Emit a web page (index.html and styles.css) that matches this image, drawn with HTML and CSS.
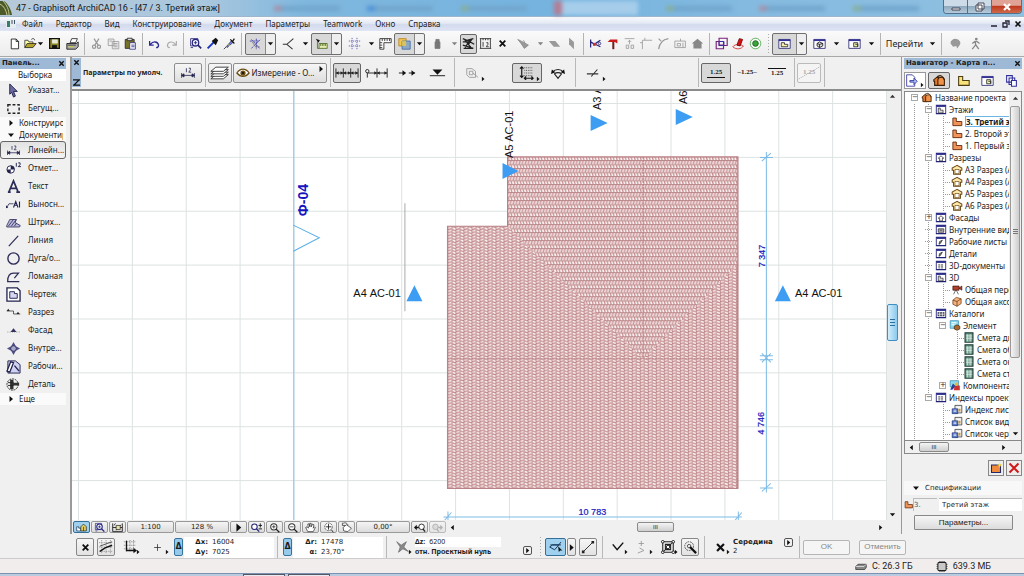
FILE: index.html
```html
<!DOCTYPE html>
<html lang="ru">
<head>
<meta charset="utf-8">
<title>47 - Graphisoft ArchiCAD 16</title>
<link rel="stylesheet" href="styles.css">
</head>
<body>
<svg class="defs" aria-hidden="true">
  <symbol id="arr" viewBox="0 0 8 8"><path d="M1 2.500h6L4 6z" fill="#111"/></symbol>
  <symbol id="rt" viewBox="0 0 8 8"><path d="M2.500 1v6L6 4z" fill="#111"/></symbol>
  <symbol id="lt" viewBox="0 0 8 8"><path d="M5.500 1v6L2 4z" fill="#111"/></symbol>
  <symbol id="up" viewBox="0 0 8 8"><path d="M1 5.500h6L4 2z" fill="#333"/></symbol>
  <symbol id="x" viewBox="0 0 8 8"><path d="M1.500 1.500l5 5M6.500 1.500l-5 5" stroke="#111" stroke-width="1.600"/></symbol>
  <symbol id="new" viewBox="0 0 16 16"><path d="M4 2.500h6l3 3v9H4z" fill="#fff" stroke="#111"/><path d="M10 2.500v3h3" fill="none" stroke="#111"/></symbol>
  <symbol id="open" viewBox="0 0 16 16"><path d="M1 13V4h4l1 2h5v3" fill="#ffffa0" stroke="#333"/><path d="M1 13l3-5h11l-4 5z" fill="#b5a42c" stroke="#222"/><path d="M9 3c2-2 4-1 4 1" fill="none" stroke="#222"/></symbol>
  <symbol id="save" viewBox="0 0 16 16"><path d="M2 2h12v12H2z" fill="#8a8423" stroke="#111" stroke-width="1.500"/><path d="M5 3h7v5H5z" fill="#e8e8d8"/><path d="M5 10h6v4H5z" fill="#111"/></symbol>
  <symbol id="print" viewBox="0 0 16 16"><path d="M5 7l2-5h7l-2 5z" fill="#fff" stroke="#222"/><path d="M1 8h12l2-2v6l-3 3H1z" fill="#aaa" stroke="#111"/><path d="M3 12h7" stroke="#dd2"/><path d="M2 10h10" stroke="#333"/></symbol>
  <symbol id="cut" viewBox="0 0 16 16"><path d="M5 2l5 8M11 2L6 10" stroke="#999" stroke-width="1.500"/><g fill="none" stroke="#999" stroke-width="1.500"><circle cx="5" cy="12" r="2"/><circle cx="11" cy="12" r="2"/></g></symbol>
  <symbol id="copy" viewBox="0 0 16 16"><g fill="#eee" stroke="#999"><path d="M1.500 2.500h7v8h-7zM6.500 5.500h8v9h-8z"/><path d="M8 8h5M8 10h5M8 12h5M3 5h3"/></g></symbol>
  <symbol id="paste" viewBox="0 0 16 16"><path d="M1.500 3h11v11h-11z" fill="#77722a" stroke="#222"/><path d="M4 1.500h6v3H4z" fill="#ddd" stroke="#222"/><path d="M7 7h7v8H7z" fill="#fff" stroke="#2b2b80"/><path d="M9 10h4M9 12h4" stroke="#2b2b80"/></symbol>
  <symbol id="undo" viewBox="0 0 16 16"><path d="M2 5v5h5M3 9c3-4 9-4 10 1 0 2-1 3-3 3" fill="none" stroke="#2a2a96" stroke-width="1.600"/></symbol>
  <symbol id="redo" viewBox="0 0 16 16"><path d="M14 5v5H9M13 9C10 5 4 5 3 10c0 2 1 3 3 3" fill="none" stroke="#aaa" stroke-width="1.400"/></symbol>
  <symbol id="find" viewBox="0 0 16 16"><path d="M2 2v9h8M2 2h9v7M5 13l-3 0" fill="none" stroke="#23237a"/><circle cx="8" cy="7" r="4" fill="#eef" stroke="#23237a" stroke-width="1.500"/><path d="M11 10l4 4" stroke="#23237a" stroke-width="2"/><path d="M6 7h4M8 5v4" stroke="#23237a"/></symbol>
  <symbol id="drop1" viewBox="0 0 16 16"><path d="M2 14l8-8" stroke="#1c35c8" stroke-width="2.500"/><path d="M7 5l5 5 3-6-3-3z" fill="#111"/></symbol>
  <symbol id="drop2" viewBox="0 0 16 16"><path d="M1 15l3-3" stroke="#223"/><path d="M4 12l6-7 2 2-7 6z" fill="#6f7ff0" stroke="#223" stroke-width=".8"/><path d="M9 3l5 5M12 5l2-3" stroke="#111" stroke-width="1.500"/><path d="M6 9l3 2" stroke="#cc3"/></symbol>
  <symbol id="snap" viewBox="0 0 16 16"><path d="M1 5h12M3 14L14 3M3 3l10 11M9 2v13" stroke="#3838a8" fill="none" stroke-dasharray="3 1"/><path d="M4 6l4 6h5" stroke="#777" fill="none"/></symbol>
  <symbol id="branch" viewBox="0 0 16 16"><path d="M1 9h5l8-7M6 9l7 6" stroke="#333" fill="none" stroke-width="1.300"/></symbol>
  <symbol id="measure" viewBox="0 0 16 16"><path d="M1 2l5 2-2 3z" fill="#111"/><path d="M5 8h10v6H5z" fill="#e6edae" stroke="#4a6a22"/><path d="M7 8v3M9 8v3M11 8v3M13 8v3M3 5v9h2" stroke="#4a6a22" fill="none"/></symbol>
  <symbol id="grid" viewBox="0 0 16 16"><path d="M5 1v14M11 1v14M1 5h14M1 11h14" stroke="#5050b8" stroke-dasharray="1.500 1"/></symbol>
  <symbol id="ruler" viewBox="0 0 16 16"><path d="M1 2h14v5H6v8H1z" fill="#fff" stroke="#222"/><path d="M4 2v3M7 2v3M10 2v3M13 2v3M1 7h3M1 10h3M1 13h3" stroke="#222"/></symbol>
  <symbol id="trace" viewBox="0 0 16 16"><path d="M1 2h9v9H1z" fill="#f4c64e" stroke="#b88420"/><path d="M5 5h10v10H5z" fill="#8ba9c4" stroke="#4067a8"/><path d="M5 5h5v6H5z" fill="#d8c45c"/></symbol>
  <symbol id="lock" viewBox="0 0 16 16"><path d="M5 6h6v8H5zM6 6V3h4v3" fill="#777" stroke="#777"/></symbol>
  <symbol id="hatchic" viewBox="0 0 16 16"><path d="M1 2l5 2 8-2M1 6h9l5 3M3 3l8 10M10 3L4 13M1 10l13 4M2 14h11M12 3l-4 6" fill="none" stroke="#222" stroke-width="1.500"/></symbol>
  <symbol id="dim12" viewBox="0 0 16 16"><path d="M1 2h14M1 14h14M2 2v12M14 2v12M5 2v2M8 2v2M11 2v2" stroke="#222" fill="none"/><path d="M5 6v6M9 7h2v2l-2 3h3" stroke="#222" fill="none"/></symbol>
  <symbol id="plane" viewBox="0 0 16 16"><path d="M1 3l6 3 7 4-5 4-4-6z" fill="#999" stroke="#888"/><path d="M10 8l-2-4" stroke="#888"/></symbol>
  <symbol id="skew1" viewBox="0 0 16 16"><path d="M1 5h8l6 7H7z" fill="#999"/></symbol>
  <symbol id="skew2" viewBox="0 0 16 16"><path d="M5 1l6 5v9L5 9z" fill="#999"/></symbol>
  <symbol id="trim1" viewBox="0 0 16 16"><path d="M2 3v10M2 6l5 3M14 4L5 10M14 12L6 8" stroke="#23237a" stroke-width="1.500"/><circle cx="7" cy="9" r="2" fill="#c33"/><circle cx="13" cy="8" r="1.500" fill="none" stroke="#23237a"/></symbol>
  <symbol id="hammer" viewBox="0 0 16 16"><path d="M2 6l3-3h9v5l-3-2z" fill="#cc1b1b"/><path d="M9 6v9" stroke="#702020" stroke-width="2.500"/></symbol>
  <symbol id="adj" viewBox="0 0 16 16"><path d="M2 2h12M8 4v5M6 6l2-2 2 2M4 10h3v4H4zM10 10h3v4h-3z" stroke="#999" fill="none"/></symbol>
  <symbol id="corner" viewBox="0 0 16 16"><path d="M3 15V4h12M6 4V1M3 7H0" stroke="#999" fill="none"/></symbol>
  <symbol id="fillet" viewBox="0 0 16 16"><path d="M2 15C3 8 7 3 14 2M5 5L2 2" stroke="#999" fill="none" stroke-width="1.500"/></symbol>
  <symbol id="boxa" viewBox="0 0 16 16"><path d="M1 5h13v8H1zM4 8h4v3H4zM8 2v3M11 7v6" stroke="#999" fill="none"/></symbol>
  <symbol id="house" viewBox="0 0 16 16"><path d="M8 2L1 8h2v6h10V8h2z" fill="#888"/></symbol>
  <symbol id="sq2" viewBox="0 0 16 16"><path d="M5 1.500h10v9H5zM1.500 5.500h9v9h-9zM5 5v5h5" stroke="#782078" fill="none" stroke-width="1.400"/><path d="M5 5.500h6v5H5z" fill="none" stroke="#3030b0"/></symbol>
  <symbol id="lipst" viewBox="0 0 16 16"><path d="M1 12c3-4 10-3 13-1-2 4-9 5-13 1z" fill="none" stroke="#c22"/><path d="M6 10l3-8 4 1-3 8z" fill="#d11" stroke="#600"/></symbol>
  <symbol id="target" viewBox="0 0 16 16"><circle cx="8" cy="8" r="6.500" fill="#fff" stroke="#3da53d"/><circle cx="8" cy="8" r="3.500" fill="#3da53d" stroke="#145a14"/></symbol>
  <symbol id="win" viewBox="0 0 16 16"><path d="M1 3h14v11H1z" fill="#fff" stroke="#23236e"/><path d="M1 3h14v2H1z" fill="#33339a"/></symbol>
  <symbol id="wplan" viewBox="0 0 16 16"><use href="#win"/><path d="M4 7h4v2h4v3H4z" fill="#f6efb0" stroke="#222"/></symbol>
  <symbol id="w3d" viewBox="0 0 16 16"><use href="#win"/><path d="M5 8l3-2 4 2v3l-4 2-3-2zM8 9v4M5 8l3 1 4-1" fill="#ddd" stroke="#111"/></symbol>
  <symbol id="wlay" viewBox="0 0 16 16"><use href="#win"/><path d="M7 7h5v5H7zM9 9h3v3" fill="#eef3b0" stroke="#222"/></symbol>
  <symbol id="orbit" viewBox="0 0 16 16"><path d="M2 8a6 5 0 1 1 11 2l-3 4-1-3-4 1z" fill="#999"/></symbol>
  <symbol id="walk" viewBox="0 0 16 16"><circle cx="9" cy="2.500" r="1.700" fill="#888"/><path d="M8 5v5l-4 5M8 9l4 6M8 5L4 8M9 5l4 3" stroke="#888" stroke-width="1.600" fill="none"/></symbol>
  <symbol id="lin" viewBox="0 0 20 16"><path d="M2 8v6M18 8v6M2 11h16M2 11l3-2v4zM18 11l-3-2v4z" stroke="#23234e" fill="#23234e"/><path d="M8 2v5M11 2h2v2l-2 3h3" stroke="#23234e" fill="none"/></symbol>
  <symbol id="layers" viewBox="0 0 24 16"><g fill="#fff" stroke="#222"><path d="M1 15l6-5h15l-6 5z"/><path d="M1 12l6-5h15l-6 5z"/><path d="M1 9l6-5h15l-6 5z"/><path d="M1 6l6-5h15l-6 5z"/></g></symbol>
  <symbol id="eye" viewBox="0 0 16 12"><path d="M1 6c4-6 10-6 14 0-4 5-10 5-14 0z" fill="#fff" stroke="#6a4c10" stroke-width="1.400"/><circle cx="8" cy="6" r="3" fill="#6a4c10"/><circle cx="8" cy="6" r="1.200" fill="#111"/></symbol>
  <symbol id="ch1" viewBox="0 0 26 12"><path d="M1 1v10M9 1v10M17 1v10M25 1v10M1 6h24" stroke="#222"/><path d="M1 6l3-2v4zM9 6L6 4v4zM9 6l3-2v4zM17 6l-3-2v4zM17 6l3-2v4zM25 6l-3-2v4z" fill="#222"/></symbol>
  <symbol id="ch2" viewBox="0 0 26 12"><circle cx="2.500" cy="4" r="1.800" fill="none" stroke="#222"/><path d="M2.500 6v5M13 1v10M24 1v10M3 6h21" stroke="#222"/><path d="M13 6l-3-2v4zM24 6l-3-2v4zM13 6l3-2v4z" fill="#222"/></symbol>
  <symbol id="ch3" viewBox="0 0 20 12"><path d="M1 6h7M12 6h7" stroke="#111"/><path d="M9 6L5 3v6zM19 6l-4-3v6z" fill="#111"/></symbol>
  <symbol id="ch4" viewBox="0 0 20 12"><path d="M2 9h17" stroke="#111"/><path d="M5 2h11l-5.500 6z" fill="#111"/></symbol>
  <symbol id="geo1" viewBox="0 0 16 16"><path d="M2 3h6l4 3v7H5l-3-3zM5 6h4v4H5z" fill="none" stroke="#999"/><path d="M9 8l6 5" stroke="#999"/></symbol>
  <symbol id="geo2" viewBox="0 0 20 16"><path d="M4 1v12M2 3l2-2 2 2M2 11l2 2 2-2M7 14h10M9 12l-2 2 2 2M15 12l2 2-2 2" stroke="#111" fill="none" stroke-width="1.300"/><path d="M7 2h10M7 5h10M7 8h10M7 11h10" stroke="#444" stroke-dasharray="1 1"/></symbol>
  <symbol id="geo3" viewBox="0 0 16 16"><path d="M2 7c3-4 9-4 12 0M4 9l4 5 4-5c-2-2-6-2-8 0z" fill="none" stroke="#222" stroke-width="1.300"/><path d="M0 9l1-5 4 3zM16 9l-1-5-4 3z" fill="#111"/></symbol>
  <symbol id="wit" viewBox="0 0 16 12"><path d="M1 7h13M6 10l7-8" stroke="#333" fill="none" stroke-width="1.300"/></symbol>
  <symbol id="ptr" viewBox="0 0 16 16"><path d="M4 1l8 8H8l2 5-2 1-2-5-2 2z" fill="#6a6aa0" stroke="#22224e"/></symbol>
  <symbol id="marq" viewBox="0 0 16 16"><path d="M2 4h12v9H2z" fill="none" stroke="#222" stroke-width="1.500" stroke-dasharray="3 2"/></symbol>
  <symbol id="lvl" viewBox="0 0 16 16"><circle cx="5" cy="9" r="4" fill="#fff" stroke="#22224e"/><path d="M5 5a4 4 0 0 1 4 4H1a4 4 0 0 0 4 4z" fill="#22224e"/><path d="M11 2v4M13 2h2v2l-2 2h3" stroke="#22224e" fill="none"/></symbol>
  <symbol id="ta" viewBox="0 0 16 16"><path d="M2 14h3M3 14L8 2l5 12M11 14h4M5 10h6" stroke="#2c2c58" stroke-width="1.800" fill="none"/></symbol>
  <symbol id="lead" viewBox="0 0 20 16"><path d="M1 12l3-5h6" stroke="#22224e" fill="none"/><path d="M0 13v-4l3 3z" fill="#22224e"/><path d="M10 12l3-8 3 8M11 9h4M18 4v8" stroke="#22224e" stroke-width="1.500" fill="none"/></symbol>
  <symbol id="htch" viewBox="0 0 20 16"><path d="M1 12L5 4h9l-2 4 7 4-1 2H1z" fill="#b8b8dc" stroke="#22224e"/><path d="M3 13l7-9M7 13l6-8M11 13l3-4" stroke="#22224e"/></symbol>
  <symbol id="line" viewBox="0 0 16 16"><path d="M3 14L13 3" stroke="#2c2c58" stroke-width="1.300"/></symbol>
  <symbol id="circ" viewBox="0 0 16 16"><circle cx="8" cy="8" r="6" fill="none" stroke="#2c2c58" stroke-width="1.500"/></symbol>
  <symbol id="poly" viewBox="0 0 18 16"><path d="M16 14H2c0-6 2-10 7-10h6l-5 6" fill="none" stroke="#2c2c58" stroke-width="1.500"/></symbol>
  <symbol id="drw" viewBox="0 0 16 16"><path d="M1 1h11l3 3v11H1z" fill="#fff" stroke="#22224e" stroke-width="1.400"/><path d="M4 5h5v2h3v5H4z" fill="#d8d8ee" stroke="#22224e"/></symbol>
  <symbol id="sec" viewBox="0 0 20 16"><path d="M1 6h9v4h9" stroke="#333" fill="none"/><path d="M1 6l2-3 2 3zM14 10l2-3 2 3z" fill="#222"/></symbol>
  <symbol id="elev" viewBox="0 0 20 16"><path d="M2 10h16" stroke="#555" stroke-dasharray="1 2"/><path d="M6 10l4-5 4 5z" fill="#33335e"/></symbol>
  <symbol id="inn" viewBox="0 0 16 16"><path d="M8 1l2.500 4.500L15 8l-4.500 2.500L8 15l-2.500-4.500L1 8l4.500-2.500z" fill="#4d4d88"/><circle cx="8" cy="8" r="3" fill="#a8a8cc" stroke="#33335e"/></symbol>
  <symbol id="wks" viewBox="0 0 16 16"><path d="M2 2h8l5 4v9H2z" fill="#cfd0f2" stroke="#22224e"/><path d="M1 13L5 3l3 1-4 10zM9 7l5 6" stroke="#22224e" stroke-width="1.400" fill="#fff"/></symbol>
  <symbol id="det" viewBox="0 0 16 16"><circle cx="7" cy="8" r="6" fill="none" stroke="#222" stroke-dasharray="2 1"/><path d="M5 3h3v10H5zM8 6h6v3H8z" fill="#333"/><path d="M5 3v10M2 6h6M2 9h6" stroke="#222"/></symbol>
  <symbol id="hb" viewBox="0 0 16 16"><path d="M6 3L1 7v2h1v5h6V8z" fill="#e07a2e" stroke="#3b1e05" stroke-width="1.300"/><path d="M6 14V7c1-4 7-4 8 0v7z" fill="#f0934a" stroke="#3b1e05" stroke-width="1.300"/><path d="M6 3c3-2 6-1 8 4" fill="none" stroke="#3b1e05" stroke-width="1.300"/></symbol>
  <symbol id="flr" viewBox="0 0 16 16"><path d="M2 3h5v5h8v6H2z" fill="#f2945a" stroke="#5f2a0a" stroke-width="1.300"/></symbol>
  <symbol id="flry" viewBox="0 0 16 16"><path d="M2 3h5v5h8v6H2z" fill="#f7e27c" stroke="#4c3c12" stroke-width="1.300"/></symbol>
  <symbol id="se" viewBox="0 0 16 16"><path d="M8 2L1 6v3h2v6h10V9h2V6z" fill="#ffe7a8" stroke="#6b4a18" stroke-width="1.500"/><path d="M5 8h6v6H5z" fill="#fff" stroke="#6b4a18"/></symbol>
  <symbol id="wd" viewBox="0 0 16 16"><path d="M1 2h14v12H1z" fill="#fff" stroke="#22227a" stroke-width="1.500"/><path d="M1 2h14v2.500H1z" fill="#3b3b98"/></symbol>
  <symbol id="w1" viewBox="0 0 16 16"><use href="#wd"/><path d="M4 6h3v3h4v4H4z" fill="#ddd" stroke="#222"/></symbol>
  <symbol id="w2" viewBox="0 0 16 16"><use href="#wd"/><path d="M8 5.500L4 9h2v4h4V9h2z" fill="#fff" stroke="#222"/></symbol>
  <symbol id="w3" viewBox="0 0 16 16"><use href="#wd"/><path d="M4 7h8v5H4zM6 9h4" fill="#bbb" stroke="#222"/></symbol>
  <symbol id="w4" viewBox="0 0 16 16"><use href="#wd"/><path d="M5 12l1-4 4-2-3 5z" fill="#888" stroke="#222"/></symbol>
  <symbol id="w5" viewBox="0 0 16 16"><use href="#wd"/><path d="M4 7h8M4 9h8M4 11.500h8" stroke="#222" stroke-dasharray="3 1"/></symbol>
  <symbol id="w6" viewBox="0 0 16 16"><use href="#wd"/><path d="M3 6h10v6H3z" fill="#445"/><path d="M6 6v6M10 6v6M3 9h10" stroke="#fff"/></symbol>
  <symbol id="cam" viewBox="0 0 16 16"><path d="M2 3h9v6H2zM11 6l4-3v6z" fill="#b0432c" stroke="#3c120b"/><path d="M6 9l-3 6M7 9l3 6" stroke="#333"/></symbol>
  <symbol id="axo" viewBox="0 0 16 16"><path d="M2 6l5-4 7 2v7l-6 4-6-3z" fill="#f5b27a" stroke="#5c3213"/><path d="M2 6l6 2 6-4M8 8v7" stroke="#5c3213" fill="none"/></symbol>
  <symbol id="elm" viewBox="0 0 16 16"><path d="M1 1h12v11H1z" fill="#8fdcf0" stroke="#2d87ad"/><path d="M3 4h7M3 7h4" stroke="#fff" stroke-width="1.500"/><path d="M7 9l4-2 4 2v4l-4 2-4-2z" fill="#b06a2e" stroke="#3c2a10"/></symbol>
  <symbol id="cmp" viewBox="0 0 16 16"><path d="M1 1h12v9H1z" fill="#8fdcf0" stroke="#2d87ad"/><path d="M5 5l4 4-5 5H1z" fill="#27409e"/><path d="M8 8h7v7H6z" fill="#d03030"/><circle cx="10" cy="6" r="2.500" fill="#e9b83a"/></symbol>
  <symbol id="sch" viewBox="0 0 12 14"><path d="M1 1h10v12H1z" fill="#7da898" stroke="#213e36" stroke-width="1.500"/><path d="M4 3v9M7.500 3v9M2 5h8M2 8h8" stroke="#d7ebe2"/></symbol>
  <symbol id="idx" viewBox="0 0 16 16"><path d="M5 2h10v11H5z" fill="#eee" stroke="#222"/><path d="M1 7h8v7H1z" fill="#5577c8" stroke="#1d2f74"/><path d="M3 9h4M3 11h4M8 5h5" stroke="#fff"/><path d="M10 7h3v4h-3z" fill="#c99a42"/></symbol>
  <symbol id="pages" viewBox="0 0 16 16"><path d="M2 2h7v8H2zM5 5h7v8H5z" fill="#fff" stroke="#2d2d9c" stroke-width="1.300"/><path d="M8 8h6v7H8z" fill="#fff" stroke="#2d2d9c" stroke-width="1.300"/></symbol>
  <symbol id="pub" viewBox="0 0 16 16"><path d="M2 1h7l3 3v11H2z" fill="#fff" stroke="#2d2d9c"/><path d="M6 8h5V5l4 4-4 4v-3H6z" fill="#a4bdf0" stroke="#2d2d9c"/></symbol>
  <symbol id="mag" viewBox="0 0 16 16"><circle cx="7" cy="7" r="4.500" fill="#fff" stroke="#333" stroke-width="1.500"/><path d="M10 10l5 5" stroke="#222" stroke-width="2"/></symbol>
  <symbol id="magp" viewBox="0 0 16 16"><use href="#mag"/><path d="M4.500 7h5M7 4.500v5" stroke="#111"/></symbol>
  <symbol id="magm" viewBox="0 0 16 16"><use href="#mag"/><path d="M4.500 7h5" stroke="#111"/></symbol>
  <symbol id="magpm" viewBox="0 0 16 16"><circle cx="5" cy="7" r="4" fill="#fff" stroke="#22227a" stroke-width="1.500"/><path d="M8 10l4 4" stroke="#22227a" stroke-width="2"/><path d="M11 5h5M13.500 2v6M11 10h5" stroke="#111" stroke-width="1.300"/></symbol>
  <symbol id="magb" viewBox="0 0 16 16"><circle cx="11" cy="7" r="4" fill="#fff" stroke="#222" stroke-width="1.300"/><path d="M13 10l3 4" stroke="#222" stroke-width="2"/><path d="M0 8l4-4v3h3v2H4v3z" fill="#111"/></symbol>
  <symbol id="magf" viewBox="0 0 16 16"><circle cx="5" cy="7" r="4" fill="#ccc" stroke="#888" stroke-width="1.300"/><path d="M7 10l3 4" stroke="#888" stroke-width="2"/><path d="M16 8l-4-4v3H9v2h3v3z" fill="#888"/></symbol>
  <symbol id="viewr" viewBox="0 0 16 16"><path d="M1 2v12h14V2M1 8h14M3 5l2-3M6 12l7-8" stroke="#222" fill="none" stroke-width="1.300"/><path d="M6 5h6v6H6z" fill="#e9e0a8" stroke="#222"/></symbol>
  <symbol id="hand" viewBox="0 0 16 16"><path d="M4 14L1 8l2-1 2 2-1-6 2-.5L7 7l0-5 2 0v5l2-4 2 1-1 5 2-2 1 1-3 6z" fill="#fff" stroke="#222"/></symbol>
  <symbol id="fit" viewBox="0 0 16 16"><circle cx="8" cy="7" r="5.500" fill="#fff" stroke="#333" stroke-dasharray="3 1"/><path d="M8 3v8M4 7h8M12 11l3 4" stroke="#222" stroke-width="1.300"/></symbol>
  <symbol id="rot" viewBox="0 0 16 16"><path d="M3 8l5-4 7 5-5 5-6-1z" fill="#fff" stroke="#222"/><path d="M3 2c3-2 7 0 7 3M2 1v4h4" fill="none" stroke="#222"/></symbol>
  <symbol id="star" viewBox="0 0 16 16"><path d="M2 2l5 4 6-4-3 6 5 5-6-3-5 4 2-6z" fill="#888" stroke="#777"/></symbol>
  <symbol id="plus" viewBox="0 0 16 16"><path d="M8 2v12M2 8h12" stroke="#222" stroke-width="1.300"/></symbol>
  <symbol id="gridln" viewBox="0 0 16 16"><path d="M0 3h16M0 8h16M0 13h16M3 0v16M8 0v16M13 0v16" stroke="#888" stroke-dasharray="1 1"/><path d="M1 13l6-4 8-3" stroke="#111" fill="none" stroke-width="1.600"/><path d="M1 7l14-5" stroke="#444"/></symbol>
  <symbol id="gridax" viewBox="0 0 16 16"><path d="M1 2h14M1 6h14M1 10h14M4 0v14M8 0v14M12 0v14" stroke="#777" stroke-dasharray="1 1"/><path d="M4 1v11h10" stroke="#111" stroke-width="1.500" fill="none"/><path d="M12 9l4 3-4 3z" fill="#111"/></symbol>
  <symbol id="guide" viewBox="0 0 20 16"><path d="M1 8l4-3h9l-6 7zM2 5h15M14 5l3-4" stroke="#17355a" stroke-width="1.400" fill="none"/><path d="M13 7l6 6-3 0-2 2z" fill="#111"/></symbol>
  <symbol id="seg" viewBox="0 0 16 16"><path d="M2 14L14 2" stroke="#222"/><path d="M1 12h3v3H1zM12 1h3v3h-3z" fill="#222"/></symbol>
  <symbol id="chk" viewBox="0 0 16 16"><path d="M2 5l5 6 7-8" stroke="#111" stroke-width="1.700" fill="none"/></symbol>
  <symbol id="pm" viewBox="0 0 16 16"><path d="M6 1v6M3 4h6M4 9l5 3-7 3" stroke="#999" fill="none"/></symbol>
  <symbol id="grp" viewBox="0 0 16 16"><path d="M2 2h12v12H2zM2 14L14 2M5 5h6v6H5z" stroke="#222" fill="none" stroke-width="1.200"/><g fill="#fff" stroke="#111"><circle cx="2" cy="2" r="1.500"/><circle cx="14" cy="2" r="1.500"/><circle cx="2" cy="14" r="1.500"/><circle cx="14" cy="14" r="1.500"/><circle cx="8" cy="8" r="2"/></g></symbol>
  <symbol id="wand" viewBox="0 0 16 16"><circle cx="7" cy="7" r="5" fill="none" stroke="#444" stroke-dasharray="2 1"/><circle cx="7" cy="7" r="2" fill="none" stroke="#444"/><path d="M8 8l7 7" stroke="#111" stroke-width="2.500"/></symbol>
  <symbol id="disk" viewBox="0 0 16 12"><path d="M1 6l3-3h11v4l-2 3H1z" fill="#888" stroke="#333"/><path d="M1 6h11l3-3" stroke="#eee" fill="none"/></symbol>
  <symbol id="chip" viewBox="0 0 16 16"><path d="M5 0v16M8 0v16M11 0v16M0 5h16M0 8h16M0 11h16" stroke="#333"/><rect x="2" y="2" width="12" height="12" rx="2" fill="#c8c8c8" stroke="#222" stroke-width="1.500"/></symbol>
  <symbol id="nav" viewBox="0 0 16 16"><path d="M1 13V7h3v2h3v4z" fill="#fff" stroke="#135"/><path d="M7 13V7l4-4 4 4v6z" fill="#e8d060" stroke="#222"/><path d="M11 7v6" stroke="#222"/></symbol>
  <symbol id="del" viewBox="0 0 16 16"><path d="M2 2l12 12M14 2L2 14" stroke="#d01818" stroke-width="2.600"/></symbol>
  <symbol id="addv" viewBox="0 0 16 16"><path d="M2 4h12v10H2z" fill="#f08a3c" stroke="#222a6a" stroke-width="1.400"/><path d="M13 0l1 3 3 1-3 1-1 3-1-3-3-1 3-1z" fill="#ffe23a"/></symbol>
</svg>

<header class="title">
  <svg class="logo" viewBox="0 0 12 14"><path d="M0 0h4c4 3 7 8 8 14H0z" fill="#4c5a2a"/><path d="M0 3c4 2 6 6 7 11M3 0c4 4 6 9 6 14" stroke="#c4c890" fill="none"/></svg>
  <h1>47 - Graphisoft ArchiCAD 16 - [47 / 3. Третий этаж]</h1>
  <div class="glass"><i class="b1"></i><i class="b2"></i><i class="b4"></i><i class="b3"></i><i class="b4"></i><i class="b1"></i><i class="b4"></i></div>
  <div class="winbtns">
    <button aria-label="Свернуть"><svg viewBox="0 0 12 10"><path d="M2 6h8v2H2z" fill="#fff" stroke="#445"/></svg></button>
    <button aria-label="Развернуть"><svg viewBox="0 0 12 10"><path d="M4 1h6v6H4zM2 3h6v6H2z" fill="#fff" stroke="#445"/></svg></button>
    <button class="close" aria-label="Закрыть"><svg viewBox="0 0 12 10"><path d="M3 2l6 6M9 2L3 8" stroke="#fff" stroke-width="2.200"/></svg></button>
  </div>
</header>

<nav class="menu">
  <svg class="mi" viewBox="0 0 12 10"><path d="M1 1h10v8H1z" fill="#e4eef0"/><path d="M2 2h3v6H2z" fill="#3d7a6c"/><path d="M7 1v4M9.500 1v4" stroke="#456"/></svg>
  <a href="#">Файл</a><a href="#">Редактор</a><a href="#">Вид</a><a href="#">Конструирование</a><a href="#">Документ</a><a href="#">Параметры</a><a href="#">Teamwork</a><a href="#">Окно</a><a href="#">Справка</a>
  <span class="mdi"><svg viewBox="0 0 8 8"><path d="M1 6h6" stroke="#223" stroke-width="1.500"/></svg><svg viewBox="0 0 8 8"><path d="M3 1h4v4M1 3h4v4H1z" fill="none" stroke="#223" stroke-width="1.300"/></svg><svg viewBox="0 0 8 8"><use href="#x"/></svg></span>
</nav>

<div class="toolbar">
  <button class="t" aria-label="Новый"><svg><use href="#new"/></svg></button>
  <button class="t open" aria-label="Открыть"><svg><use href="#open"/></svg><svg class="a"><use href="#arr"/></svg></button>
  <button class="t" aria-label="Сохранить"><svg><use href="#save"/></svg></button>
  <button class="t" aria-label="Печать"><svg><use href="#print"/></svg></button><i class="sep"></i>
  <button class="t" aria-label="Вырезать"><svg><use href="#cut"/></svg></button>
  <button class="t" aria-label="Копировать"><svg><use href="#copy"/></svg></button>
  <button class="t" aria-label="Вставить"><svg><use href="#paste"/></svg></button><i class="sep"></i>
  <button class="t" aria-label="Отмена"><svg><use href="#undo"/></svg></button>
  <button class="t" aria-label="Повтор"><svg><use href="#redo"/></svg></button><i class="sep"></i>
  <button class="t" aria-label="Найти"><svg><use href="#find"/></svg></button>
  <button class="t" aria-label="Взять параметры"><svg><use href="#drop1"/></svg></button>
  <button class="t" aria-label="Передать параметры"><svg><use href="#drop2"/></svg></button><i class="sep"></i>
  <button class="g" aria-label="Линии привязки"><svg><use href="#snap"/></svg><svg class="a"><use href="#arr"/></svg></button>
  <button class="d" aria-label="Направляющие"><svg><use href="#branch"/></svg><svg class="a"><use href="#arr"/></svg></button>
  <button class="g" aria-label="Табло"><svg><use href="#measure"/></svg><svg class="a"><use href="#arr"/></svg></button>
  <button class="d" aria-label="Сетка"><svg><use href="#grid"/></svg><svg class="a"><use href="#arr"/></svg></button>
  <button class="t" aria-label="Линейки"><svg><use href="#ruler"/></svg></button>
  <button class="g" aria-label="Фон"><svg><use href="#trace"/></svg><svg class="a"><use href="#arr"/></svg></button>
  <button class="d" aria-label="Блокировка"><svg><use href="#lock"/></svg><svg class="a dim"><use href="#arr"/></svg></button>
  <button class="t on" aria-label="Группы"><svg><use href="#hatchic"/></svg></button>
  <button class="t" aria-label="Размеры"><svg><use href="#dim12"/></svg></button>
  <button class="t x" aria-label="Сброс"><svg><use href="#x"/></svg></button>
  <button class="d" aria-label="Плоскость"><svg><use href="#plane"/></svg><svg class="a dim"><use href="#arr"/></svg></button>
  <button class="t" aria-label="Горизонтально"><svg><use href="#skew1"/></svg></button>
  <button class="t" aria-label="Вертикально"><svg><use href="#skew2"/></svg></button><i class="sep"></i>
  <button class="t" aria-label="Обрезать"><svg><use href="#trim1"/></svg></button>
  <button class="t" aria-label="Расщепить"><svg><use href="#hammer"/></svg></button>
  <button class="t" aria-label="Подогнать"><svg><use href="#adj"/></svg></button>
  <button class="t" aria-label="Угол"><svg><use href="#corner"/></svg></button>
  <button class="t" aria-label="Сопряжение"><svg><use href="#fillet"/></svg></button>
  <button class="t" aria-label="Изменить размер"><svg><use href="#boxa"/></svg></button>
  <button class="t" aria-label="Крыша"><svg><use href="#house"/></svg></button><i class="sep"></i>
  <button class="t" aria-label="Выбор"><svg><use href="#sq2"/></svg></button>
  <button class="t" aria-label="Пометки"><svg><use href="#lipst"/></svg></button>
  <button class="t" aria-label="Цель"><svg><use href="#target"/></svg></button><i class="dots"></i>
  <button class="g wide" aria-label="План этажа"><svg><use href="#wplan"/></svg><svg class="a"><use href="#arr"/></svg></button>
  <button class="d wide" aria-label="3D"><svg><use href="#w3d"/></svg><svg class="a"><use href="#arr"/></svg></button>
  <button class="d wide" aria-label="Макет"><svg><use href="#wlay"/></svg><svg class="a"><use href="#arr"/></svg></button><i class="sep"></i>
  <button class="go">Перейти<svg class="a"><use href="#arr"/></svg></button><i class="sep"></i>
  <button class="t w20" aria-label="Орбита"><svg><use href="#orbit"/></svg></button>
  <button class="t w20" aria-label="Прогулка"><svg><use href="#walk"/></svg></button>
</div>

<main>
  <aside class="palette">
    <h2 class="cap"><span>Панель...</span><svg><use href="#x"/></svg></h2>
    <h3 class="white">Выборка</h3>
    <button><svg><use href="#ptr"/></svg>Указат...</button>
    <button><svg><use href="#marq"/></svg>Бегущ...</button>
    <h3 class="sec"><svg><use href="#rt"/></svg><span>Конструирование</span></h3>
    <h3 class="sec"><svg><use href="#arr"/></svg><span>Документирование</span></h3>
    <button class="sel"><svg><use href="#lin"/></svg>Линейн...</button>
    <button><svg><use href="#lvl"/></svg>Отмет...</button>
    <button><svg><use href="#ta"/></svg>Текст</button>
    <button><svg><use href="#lead"/></svg>Выносн...</button>
    <button><svg><use href="#htch"/></svg>Штрих...</button>
    <button><svg><use href="#line"/></svg>Линия</button>
    <button><svg><use href="#circ"/></svg>Дуга/о...</button>
    <button><svg><use href="#poly"/></svg>Ломаная</button>
    <button><svg><use href="#drw"/></svg>Чертеж</button>
    <button><svg><use href="#sec"/></svg>Разрез</button>
    <button><svg><use href="#elev"/></svg>Фасад</button>
    <button><svg><use href="#inn"/></svg>Внутре...</button>
    <button><svg><use href="#wks"/></svg>Рабочи...</button>
    <button><svg><use href="#det"/></svg>Деталь</button>
    <h3 class="sec"><svg><use href="#rt"/></svg><span>Еще</span></h3>
  </aside>

  <section class="center">
    <div class="info">
      <div class="grip"><svg><use href="#x"/></svg><svg viewBox="0 0 8 8"><path d="M0 1h8M0 7h8M1 7l6-6" stroke="#111" stroke-width="1.600"/></svg></div>
      <b class="deflt">Параметры по умолч.</b>
      <button class="ib w28" aria-label="Размер"><svg class="i16"><use href="#lin"/></svg></button><i class="vs"></i>
      <button class="ib w24" aria-label="Слои"><svg class="i22"><use href="#layers"/></svg></button>
      <button class="ib layer"><svg class="i14"><use href="#eye"/></svg>Измерение - О...<svg class="a"><use href="#rt"/></svg></button><i class="vs"></i>
      <button class="ib w28 on" aria-label="Цепочка"><svg class="i24"><use href="#ch1"/></svg></button>
      <button class="ib flat w30" aria-label="База"><svg class="i24"><use href="#ch2"/></svg></button>
      <button class="ib flat w30" aria-label="Приращение"><svg class="i18"><use href="#ch3"/></svg></button>
      <button class="ib flat w30" aria-label="Отметка"><svg class="i18"><use href="#ch4"/></svg></button><i class="vs"></i>
      <button class="ib flat w30" aria-label="Контур"><svg class="i16"><use href="#geo1"/></svg><svg class="c"><use href="#rt"/></svg></button>
      <button class="ib w30 on gap" aria-label="Метод"><svg class="i18"><use href="#geo2"/></svg><svg class="c"><use href="#rt"/></svg></button>
      <button class="ib flat w30" aria-label="Дуга"><svg class="i14"><use href="#geo3"/></svg></button><i class="vs"></i>
      <button class="ib flat w30" aria-label="Выноска"><svg class="i14"><use href="#wit"/></svg><svg class="c"><use href="#rt"/></svg></button><i class="vs push"></i>
      <button class="ib w30 on num"><span class="u">1.25</span></button>
      <button class="ib flat w30 num">–1.25–</button>
      <button class="ib flat w30 num"><span class="o">1.25</span></button><i class="vs"></i>
      <button class="ib w24 num off"><span>1.25</span></button><i class="vs"></i>
    </div>
    <div class="view">
      <svg class="canvas" viewBox="73 91 814 430" preserveAspectRatio="xMinYMin slice" role="img" aria-label="План этажа">
        <defs>
          <pattern id="ph" width="6" height="8" patternUnits="userSpaceOnUse">
            <path d="M0 0h6v8H0z" fill="#fdf6f5"/>
            <path d="M0 .5h6M0 4.500h6" stroke="#b98588"/><path d="M.5 4l1-3M3.500 4l1-3M2.500 8l-1-3M5.500 8l-1-3" stroke="#c08488" stroke-width="1.200"/>
            <path d="M0 2.500h6" stroke="#e2b5b7" stroke-width=".6"/>
          </pattern>
          <pattern id="pv" width="8" height="6" patternUnits="userSpaceOnUse">
            <path d="M0 0h8v6H0z" fill="#fdf6f5"/>
            <path d="M.5 0v6M4.500 0v6" stroke="#b98588"/><path d="M4 .5l-3 1M4 3.500l-3 1M8 2.500l-3-1M8 5.500l-3-1" stroke="#c08488" stroke-width="1.200"/>
            <path d="M2.500 0v6" stroke="#e2b5b7" stroke-width=".6"/>
          </pattern>
          <pattern id="gr" x="79" y="103" width="53.800" height="53.800" patternUnits="userSpaceOnUse"><path d="M.5 0v54M0 .5h54" stroke="#dde2e2" fill="none"/></pattern>
        </defs>
        <path d="M73 91h814v430H73z" fill="url(#gr)"/>
        <path d="M294.500 91v430" stroke="#86c4e6"/>
        <path d="M405.500 203v108" stroke="#aaa"/>
        <path d="M448 226h60v-69h230v331H448z" fill="url(#pv)" stroke="#b98085"/>
        <path d="M508 157h230v107l-95 94-135-132z" fill="url(#ph)"/>
        <path d="M643.500 157v200M448 358.500h290" stroke="#b98488" stroke-dasharray="2 1"/>
        <path d="M508 226V157h230v331" fill="none" stroke="#b98085"/>
        <g stroke="#7dbbe6" fill="none">
          <path d="M766.500 152v340M760 157.500h13M760 355.500h13M760 359.500h13M760 487.500h13M444 516.500h298M448.500 511v10M738.500 511v10M762 161l9-8M762 362l9-9M771 362l-9-9M762 491l9-8M445 520l7-8M735 520l7-8"/>
          <path d="M294 225l26 12.500L294 251" stroke="#59aee6"/>
        </g>
        <g fill="#3d9df2"><path d="M503 163l16 8-16 8zM591 115l17 8-17 8zM676 109l17 8-17 8zM415 285l8 16h-16zM783 285l8 16h-16z"/></g>
        <g class="lab">
          <text x="354" y="297">A4 АС-01</text><text x="795" y="297">A4 АС-01</text>
          <text transform="translate(513 158) rotate(-90)">A5 АС-01</text>
          <text transform="translate(601 110) rotate(-90)">A3 АС-01</text>
          <text transform="translate(687 104) rotate(-90)">A6 АС-01</text>
        </g>
        <g class="dimt">
          <text x="579" y="514">10 783</text>
          <text transform="translate(765 267) rotate(-90)">7 347</text>
          <text transform="translate(764 434) rotate(-90)">4 746</text>
        </g>
        <text class="axis" transform="translate(309 216) rotate(-90)">Ф-04</text>
      </svg>
      <div class="vscroll"><svg><use href="#up"/></svg><i class="vthumb"></i><svg class="dn"><use href="#arr"/></svg></div>
    </div>
    <div class="viewbar">
      <button class="vb blue" aria-label="Навигатор"><svg><use href="#nav"/></svg></button>
      <button class="vb" aria-label="Обзор"><svg><use href="#find"/></svg></button>
      <button class="vb" aria-label="Вид"><svg><use href="#viewr"/></svg></button>
      <button class="vb scale">1:100</button>
      <button class="vb pct">128 %</button>
      <button class="vb" aria-label="Далее"><svg class="a"><use href="#rt"/></svg></button>
      <button class="vb" aria-label="Масштаб"><svg><use href="#magpm"/></svg></button>
      <button class="vb" aria-label="Увеличить"><svg><use href="#magp"/></svg></button>
      <button class="vb" aria-label="Уменьшить"><svg><use href="#magm"/></svg></button>
      <button class="vb" aria-label="Рука"><svg><use href="#hand"/></svg></button>
      <button class="vb" aria-label="Подогнать окно"><svg><use href="#fit"/></svg></button>
      <button class="vb" aria-label="Поворот"><svg><use href="#rot"/></svg></button>
      <button class="vb pct">0,00°</button>
      <button class="vb" aria-label="Назад"><svg><use href="#magb"/></svg></button>
      <button class="vb fade" aria-label="Вперед"><svg><use href="#magf"/></svg></button>
      <div class="hscroll"><svg><use href="#lt"/></svg><i class="hthumb">III</i><svg><use href="#rt"/></svg></div>
    </div>
  </section>

  <aside class="navi">
    <h2 class="cap"><span>Навигатор - Карта п...</span><svg><use href="#x"/></svg></h2>
    <div class="tabs">
      <button class="tb out" aria-label="Издатель"><svg><use href="#pub"/></svg><svg class="c"><use href="#rt"/></svg></button>
      <button class="tb on" aria-label="Карта проекта"><svg><use href="#hb"/></svg></button>
      <button class="tb" aria-label="Карта видов"><svg><use href="#flry"/></svg></button>
      <button class="tb" aria-label="Макеты"><svg><use href="#wlay"/></svg></button>
      <button class="tb" aria-label="Наборы"><svg><use href="#pages"/></svg></button>
    </div>
    <div class="treebox">
      <ul class="tree">
        <li class="l0"><i class="ex">−</i><svg><use href="#hb"/></svg>Название проекта</li>
        <li class="l1"><i class="ex">−</i><svg><use href="#w1"/></svg>Этажи</li>
        <li class="l2"><svg><use href="#flr"/></svg><b>3. Третий этаж</b></li>
        <li class="l2"><svg><use href="#flr"/></svg>2. Второй этаж</li>
        <li class="l2"><svg><use href="#flr"/></svg>1. Первый этаж</li>
        <li class="l1"><i class="ex">−</i><svg><use href="#w2"/></svg>Разрезы</li>
        <li class="l2"><svg><use href="#se"/></svg>A3 Разрез (Авто)</li>
        <li class="l2"><svg><use href="#se"/></svg>A4 Разрез (Авто)</li>
        <li class="l2"><svg><use href="#se"/></svg>A5 Разрез (Авто)</li>
        <li class="l2"><svg><use href="#se"/></svg>A6 Разрез (Авто)</li>
        <li class="l1"><i class="ex">+</i><svg><use href="#w2"/></svg>Фасады</li>
        <li class="l1"><i class="nx"></i><svg><use href="#w3"/></svg>Внутренние виды</li>
        <li class="l1"><i class="nx"></i><svg><use href="#w4"/></svg>Рабочие листы</li>
        <li class="l1"><i class="nx"></i><svg><use href="#w4"/></svg>Детали</li>
        <li class="l1"><i class="nx"></i><svg><use href="#w5"/></svg>3D-документы</li>
        <li class="l1"><i class="ex">−</i><svg><use href="#w1"/></svg>3D</li>
        <li class="l2"><svg><use href="#cam"/></svg>Общая перспектива</li>
        <li class="l2"><svg><use href="#axo"/></svg>Общая аксонометрия</li>
        <li class="l1"><i class="ex">−</i><svg><use href="#w6"/></svg>Каталоги</li>
        <li class="l2 p"><i class="ex">−</i><svg><use href="#elm"/></svg>Элемент</li>
        <li class="l3"><svg><use href="#sch"/></svg>Смета дверей</li>
        <li class="l3"><svg><use href="#sch"/></svg>Смета объектов</li>
        <li class="l3"><svg><use href="#sch"/></svg>Смета окон</li>
        <li class="l3"><svg><use href="#sch"/></svg>Смета стен</li>
        <li class="l2 p"><i class="ex">+</i><svg><use href="#cmp"/></svg>Компонента</li>
        <li class="l1"><i class="ex">−</i><svg><use href="#w5"/></svg>Индексы проекта</li>
        <li class="l2"><svg><use href="#idx"/></svg>Индекс листов</li>
        <li class="l2"><svg><use href="#idx"/></svg>Список видов</li>
        <li class="l2"><svg><use href="#idx"/></svg>Список чертежей</li>
      </ul>
      <div class="tscroll"><svg><use href="#up"/></svg><i class="tthumb"></i><svg><use href="#arr"/></svg></div>
    </div>
    <div class="hs2"><svg><use href="#lt"/></svg><i class="hthumb">III</i><svg class="end"><use href="#rt"/></svg></div>
    <div class="acts"><button aria-label="Новый вид"><svg><use href="#addv"/></svg></button><button aria-label="Удалить"><svg><use href="#del"/></svg></button></div>
    <h3 class="spec"><svg><use href="#arr"/></svg>Спецификации</h3>
    <div class="fields"><svg><use href="#flr"/></svg><input class="f1" aria-label="Номер" value="3." readonly><input class="f2" aria-label="Название" value="Третий этаж"></div>
    <button class="params">Параметры...</button>
  </aside>
</main>

<div class="coords">
  <button class="cb" aria-label="Скрыть"><svg class="s8"><use href="#x"/></svg></button>
  <button class="cb" aria-label="Сетка"><svg><use href="#gridln"/></svg></button>
  <button class="cb flat w24" aria-label="Начало"><svg><use href="#gridax"/></svg><svg class="c"><use href="#rt"/></svg></button>
  <button class="cb flat w28" aria-label="Точка"><svg class="s8"><use href="#plus"/></svg><svg class="c"><use href="#rt"/></svg></button>
  <button class="dl">Δ</button>
  <dl class="w"><div><dt>Δx:</dt><dd>16004</dd></div><div><dt>Δy:</dt><dd>7025</dd></div></dl><i class="vs"></i>
  <button class="dl">Δ</button>
  <dl class="w"><div><dt>Δr:</dt><dd>17478</dd></div><div><dt>α:</dt><dd>23,70°</dd></div></dl><i class="vs"></i>
  <button class="cb flat w24" aria-label="Плоскость"><svg><use href="#star"/></svg><svg class="c"><use href="#rt"/></svg></button>
  <dl class="z"><div class="wt"><dt>Δz:</dt><dd>6200</dd></div><div>отн. Проектный нуль</div></dl>
  <button class="sm" aria-label="Уровень"><svg><use href="#rt"/></svg></button><i class="dots"></i>
  <button class="cb blue w22" aria-label="Направляющие"><svg><use href="#guide"/></svg></button>
  <button class="cb nar" aria-label="Варианты"><svg class="s8"><use href="#rt"/></svg></button>
  <button class="cb" aria-label="Отрезок"><svg><use href="#seg"/></svg></button><i class="vs"></i>
  <button class="cb flat w24" aria-label="Перпендикуляр"><svg><use href="#chk"/></svg><svg class="c"><use href="#rt"/></svg></button>
  <button class="cb flat w24" aria-label="Смещение"><svg><use href="#pm"/></svg><svg class="c"><use href="#rt"/></svg></button>
  <button class="cb flat w24" aria-label="Группа"><svg><use href="#grp"/></svg><svg class="c"><use href="#rt"/></svg></button>
  <button class="cb" aria-label="Волшебная палочка"><svg><use href="#wand"/></svg></button><i class="vs"></i>
  <button class="cb flat w24" aria-label="Привязка"><svg class="s11"><use href="#x"/></svg><svg class="c"><use href="#rt"/></svg></button>
  <p class="mid"><b>Середина</b><span>2</span></p>
  <button class="sm top" aria-label="Деление"><svg><use href="#rt"/></svg></button><i class="vs"></i>
  <button class="ok" disabled>OK</button><button class="ok" disabled>Отменить</button>
</div>

<footer class="status"><svg><use href="#disk"/></svg><span class="s1">C: 26.3 ГБ</span><svg><use href="#chip"/></svg><span class="s2">639.3 МБ</span></footer>
<div class="edge"><i></i><i></i></div>
</body>
</html>
```
FILE: styles.css
```css
* { box-sizing: border-box; }
body { margin: 0; height: 100vh; display: flex; flex-direction: column; overflow: hidden; background: #f0f0f0; color: #1c1c1c; font: 8px/12px "Noto Sans", sans-serif; }
.defs { position: absolute; width: 0; height: 0; }
h1, h2, h3, p, dl, dd, ul { margin: 0; padding: 0; font-weight: normal; font-size: inherit; }
i { font-style: normal; }
button, input { font: inherit; color: inherit; margin: 0; padding: 0; border: 0; background: none; border-radius: 0; }
button { display: flex; align-items: center; justify-content: center; flex: none; white-space: nowrap; position: relative; }
svg { flex: none; width: 14px; height: 14px; display: block; }
svg.a { width: 8px; height: 8px; }
svg.c { position: absolute; right: 0; bottom: 0; width: 6px; height: 6px; }
.dim { opacity: .5; }
.sep { flex: none; width: 7px; height: 22px; background: linear-gradient(#b4b4b4, #b4b4b4) center / 1px 100% no-repeat; }
.dots { flex: none; width: 8px; height: 20px; background: repeating-linear-gradient(#aaa 0 1px, transparent 1px 3px) center / 1px 100% no-repeat; }
.vs { flex: none; width: 1px; height: 100%; background: #b8b8b8; margin: 0 2px; }

.title { flex: none; height: 17px; display: flex; align-items: center; gap: 4px; background: linear-gradient(90deg, #b6c9d8, #a9c7de 20%, #7fb7de 30%, #75b3df 55%, #86bbe0 75%, #8fc0e0); border-bottom: 1px solid #9fb6cc; }
.logo { width: 12px; height: 14px; }
.title h1 { font-size: 9px; font-family: Roboto, sans-serif; color: #151515; white-space: nowrap; }
.glass { flex: 1; height: 15px; display: flex; justify-content: space-between; align-items: center; overflow: hidden; filter: blur(2px); padding: 0 20px 0 50px; }
.glass i { width: 66px; height: 5px; background: #71a5cc; border-left: 8px solid #a58fa6; }
.glass .b2 { border-left-color: #4b8fd6; }
.glass .b3 { height: 14px; width: 84px; background: #a6cdea; border-left-color: #b47c92; }
.glass .b4 { border-left-color: #86ae98; }
.winbtns { display: flex; height: 14px; align-self: flex-start; border: 1px solid #50708c; border-top: 0; border-radius: 0 0 4px 4px; margin-right: 2px; overflow: hidden; }
.winbtns button { width: 24px; background: linear-gradient(#cddbe8 45%, #8fa9bf 50%, #b5cbdc); border-right: 1px solid #50708c; }
.winbtns .close { width: 29px; border: 0; background: linear-gradient(#e0a294 40%, #c03a20 50%, #cf6a4a); }
.winbtns svg { width: 12px; height: 10px; }

.menu { flex: none; height: 14px; display: flex; align-items: center; gap: 13px; padding-left: 5px; background: linear-gradient(#fbfcfe, #e3e8f4 45%, #d3daed 55%, #dfe5f4); }
.menu a { color: #1b1b1b; text-decoration: none; font-size: 8px; }
.menu .mi { width: 12px; height: 10px; margin-right: -8px; }
.mdi { margin-left: auto; display: flex; gap: 4px; padding-right: 2px; }
.mdi svg { width: 8px; height: 8px; }

.toolbar { flex: none; height: 26px; display: flex; align-items: center; padding-left: 5px; background: linear-gradient(#fafafa, #ececec); border-bottom: 1px solid #a8a8a8; }
.t { width: 17px; height: 20px; }
.toolbar > .t:nth-child(-n+4) { width: 18px; }
.toolbar > .open { width: 22px !important; }
.t svg, .g svg, .d svg { width: 13px; height: 13px; }
.t.x svg { width: 9px; height: 9px; }
.w20 { width: 20px; }
.open svg.a, .g svg.a, .d svg.a, .go svg.a { width: 7px; height: 7px; }
.g, .d { height: 22px; justify-content: space-between; padding: 0 2px 0 4px; }
.g { width: 31px; border: 1px solid #6f6f6f; border-radius: 2px; background: linear-gradient(90deg, transparent 19px, #888 19px 20px, #eee 20px), #d8d8d8; padding: 0 1px 0 3px; }
.g.wide { width: 35px; background: linear-gradient(90deg, transparent 23px, #888 23px 24px, #eee 24px), #d8d8d8; }
.g.wide svg { margin-left: 2px; }
.d { width: 35px; padding: 0 2px 0 6px; }
.t.on, .ib.on, .tb.on { border: 1px solid #666; border-radius: 2px; background: #d8d8d8; }
.go { width: 54px; gap: 6px; font-size: 9px; }

main { flex: 1; min-height: 0; display: flex; }
.cap { display: flex; align-items: center; justify-content: space-between; height: 11px; background: #9db9d6; font: bold 7px/11px "DejaVu Sans", sans-serif; padding: 0 1px 0 2px; }
.cap svg { width: 7px; height: 7px; }
.palette { flex: none; width: 72px; padding: 1px 4px 0 0; border-right: 2px solid #9a9a9a; }
.palette .white { height: 12px; background: #fff; text-align: center; padding-left: 4px; line-height: 11px; }
.palette button { width: 100%; height: 18px; justify-content: flex-start; padding-left: 5px; gap: 7px; border: 1px solid transparent; }
.palette button svg { width: 15px; height: 15px; }
.palette button.sel { border: 1px solid #666; border-radius: 3px; background: linear-gradient(#e2e2e2, #f4f4f4); }
.sec { height: 12px; background: #fafafa; display: flex; align-items: center; gap: 4px; padding-left: 7px; overflow: hidden; }
.sec span { white-space: nowrap; overflow: hidden; width: 44px; }
.sec svg { width: 8px; height: 8px; }

.center { flex: 1; min-width: 0; display: flex; flex-direction: column; }
.info { flex: none; height: 34px; padding: 1px 0 2px; display: flex; align-items: center; border-bottom: 2px solid #8c8c8c; }
.grip { width: 9px; align-self: stretch; background: #9db9d6; display: flex; flex-direction: column; justify-content: space-between; padding: 1px; }
.grip svg { width: 7px; height: 7px; }
.deflt { font: bold 7px/12px "Noto Sans", sans-serif; width: 93px; padding-left: 2px; white-space: nowrap; }
.ib { height: 20px; border: 1px solid #8e8e8e; border-radius: 2px; background: linear-gradient(#f6f6f6, #dedede); margin-right: 1px; }
.ib.flat { border-color: transparent; background: none; margin: 0; }
.w22 { width: 22px; } .w24 { width: 24px; } .w28 { width: 28px; } .w30 { width: 30px; }
.i14 { width: 14px; } .i16 { width: 16px; } .i18 { width: 18px; } .i22 { width: 20px; } .i24 { width: 24px; }
.layer { width: 94px; gap: 2px; }
.layer .a { align-self: flex-start; margin-top: 1px; }
.ib.gap { margin-left: 25px; }
.push { margin-left: 90px; }
.num { font: bold 7px/9px "Liberation Serif", serif; }
.num .u { border-bottom: 1px solid #111; padding: 0 3px; }
.num .o { border-top: 1px solid #111; padding: 0 3px; }
.num.off { color: #aaa; border-color: #bbb; background: linear-gradient(150deg, #f4f4f4 48%, #bbb 50%, #f4f4f4 52%); }
.view { flex: 1; min-height: 0; display: flex; }
.canvas { flex: 1; min-width: 0; width: auto; height: 100%; background: #fff; }
.lab { font: 11px "Liberation Sans", sans-serif; fill: #111; }
.dimt { font: 9px "Liberation Sans", sans-serif; fill: #1616c0; stroke: #1616c0; stroke-width: .2px; }
.axis { font: bold 14px "Liberation Sans", sans-serif; fill: #1616c0; }
.vscroll { flex: none; width: 14px; background: #efefef; display: flex; flex-direction: column; align-items: center; padding: 2px 3px 2px 0; }
.vscroll svg, .tscroll svg { width: 7px; height: 7px; }
.vthumb { width: 11px; height: 37px; margin: 204px 0 auto; border: 1px solid #3e8fc4; border-radius: 2px; background: repeating-linear-gradient(#2c6f9c 0 1px, transparent 1px 3px) center / 5px 7px no-repeat, linear-gradient(90deg, #d4eefb, #8acaed); }
.viewbar { flex: none; height: 14px; display: flex; align-items: center; gap: 1px; font: bold 7px/11px "DejaVu Sans", sans-serif; padding-left: 1px; }
.vb { width: 17px; height: 12px; border: 1px solid #999; border-radius: 2px; background: linear-gradient(#f5f5f5, #dcdcdc); font-weight: normal; }
.vb svg { width: 13px; height: 11px; }
.vb.blue, .cb.blue { background: #9fd0ee; border-color: #336f99; }
.scale { width: 47px; } .pct { width: 54px; }
.fade { opacity: .6; }
.hscroll, .hs2 { flex: 1; display: flex; align-items: center; justify-content: space-between; padding: 0 17px 0 2px; }
.hscroll .hthumb { margin-right: 22px; }
.hscroll svg, .hs2 svg { width: 7px; height: 7px; }
.hthumb { width: 37px; height: 10px; border: 1px solid #8a8a8a; border-radius: 2px; background: linear-gradient(#f4f4f4, #cfcfcf); font: 6px/8px "Liberation Sans", sans-serif; text-align: center; }

.navi { flex: none; width: 123px; padding: 1px 2px 0; border-left: 1px solid #999; display: flex; flex-direction: column; }
.tabs { display: flex; align-items: center; justify-content: space-between; height: 22px; padding: 1px 0; }
.tb { width: 22px; height: 17px; }
.tb svg { width: 13px; height: 13px; }
.tb svg.c { width: 6px; height: 6px; }
.tb.out { border: 1px solid #999; background: #fff; justify-content: flex-start; }
.treebox { height: 350px; display: flex; border: 1px solid #888; background: #fff; }
.tree { flex: 1; min-width: 0; list-style: none; overflow: hidden; line-height: 11px; background: repeating-linear-gradient(#999 0 1px, transparent 1px 2px) 9px 12px / 1px 100% no-repeat, repeating-linear-gradient(#999 0 1px, transparent 1px 2px) 23px 12px / 1px 294px no-repeat; }
.tree li { height: 12px; display: flex; align-items: flex-start; white-space: nowrap; gap: 2px; }
.tree svg { width: 12px; height: 11px; }
.tree b { outline: 1px solid #6cb6e4; outline-offset: -1px; padding-left: 1px; }
.ex { flex: none; width: 7px; height: 7px; border: 1px solid #aaa; background: #fff; font: 7px/5px "DejaVu Sans", sans-serif; text-align: center; margin: 2px 1px 0 0; }
.nx { flex: none; width: 7px; margin: 5px 1px 0 0; border-top: 1px dotted #999; }
.l0 { padding-left: 6px; } .l1 { padding-left: 20px; } .l2 { padding-left: 46px; } .l2.p { padding-left: 34px; } .l3 { padding-left: 58px; }
.l2:not(.p), .l3 { background: repeating-linear-gradient(90deg, #999 0 1px, transparent 1px 2px) 38px 6px / 7px 1px no-repeat, repeating-linear-gradient(#999 0 1px, transparent 1px 2px) 38px 0 / 1px 12px no-repeat; }
.l3 { background-position: 52px 6px, 52px 0; }
.tscroll { flex: none; width: 12px; background: #f0f0f0; display: flex; flex-direction: column; align-items: center; padding: 3px 0; gap: 4px; }
.tthumb { width: 10px; height: 252px; border: 1px solid #999; border-radius: 2px; background: repeating-linear-gradient(#777 0 1px, transparent 1px 2px) center / 5px 6px no-repeat, linear-gradient(90deg, #f5f5f5, #cdcdcd); }
.tscroll svg:last-child { margin-top: auto; }
.hs2 { flex: none; height: 13px; border: 1px solid #888; border-top: 0; justify-content: flex-start; gap: 4px; padding: 0 14px 0 3px; }
.hs2 .hthumb { width: 30px; }
.hs2 .end { margin-left: auto; }
.acts { display: flex; justify-content: flex-end; gap: 2px; padding: 6px 0 5px; }
.acts button { width: 16px; height: 16px; border: 1px solid #888; background: #eee; }
.acts svg { width: 12px; height: 12px; }
.spec { height: 14px; display: flex; align-items: center; gap: 5px; padding-left: 8px; background: #f8f8f8; font: 7px/12px "DejaVu Sans", sans-serif; margin-bottom: 3px; }
.spec svg { width: 8px; height: 8px; }
.fields { display: flex; align-items: center; font: 7px/10px "DejaVu Sans", sans-serif; }
.fields svg { width: 9px; height: 9px; }
.f1 { width: 24px; height: 13px; border: 1px solid #bbb; border-width: 1px 0 0 1px; color: #555; margin-right: 2px; }
.f2 { flex: 1; min-width: 0; height: 13px; background: #fff; border-top: 1px solid #bbb; padding-left: 3px; }
.params { width: 99px; height: 15px; margin: 4px 0 0 10px; border: 1px solid #888; border-radius: 1px; background: linear-gradient(#f6f6f6, #dcdcdc); font: 8px/12px "Liberation Sans", sans-serif; }

.coords { flex: none; height: 25px; display: flex; align-items: center; padding: 2px 0 0 76px; background: #f0f0f0; border-bottom: 1px solid #ccc; gap: 1px; }
.cb { width: 18px; height: 18px; border: 1px solid #888; border-radius: 2px; background: linear-gradient(#f6f6f6, #e2e2e2); margin-right: 2px; }
.cb.flat { border-color: transparent; background: none; margin-right: 0; }
.cb.w22 { width: 21px; margin-right: 0; } .cb.w24 { width: 24px; } .cb.w28 { width: 28px; }
.cb.nar { width: 9px; }
.cb .s8 { width: 9px; height: 9px; }
.cb .s11 { width: 11px; height: 11px; }
.coords svg.c { width: 6px; height: 6px; }
.dl { width: 9px; height: 18px; border: 1px solid #3674a0; border-radius: 2px; background: #96c9ea; font: bold 8px/16px "DejaVu Sans", sans-serif; margin-left: 2px; }
.coords dl { font: bold 7px/10px "DejaVu Sans", sans-serif; height: 21px; }
.coords dl > div { display: flex; height: 10px; gap: 4px; white-space: nowrap; }
.w { width: 90px; background: #fff; }
.w dt { width: 24px; text-align: right; }
.z { width: 107px; }
.z .wt { background: #fff; width: 86px; }
.coords .z { font-family: "Noto Sans", sans-serif; }
.sm { width: 9px; height: 9px; border: 1px solid #555; border-radius: 2px; align-self: flex-end; margin: 0 3px 3px 0; }
.sm svg { width: 7px; height: 7px; }
.sm.top { align-self: flex-start; margin-top: 2px; }
.mid { width: 50px; display: flex; flex-direction: column; font: 7px/9px "DejaVu Sans", sans-serif; }
.ok { width: 47px; height: 15px; border: 1px solid #b5b5b5; border-radius: 2px; background: #f5f5f5; color: #888; margin-right: 8px; font: 8px/12px "Liberation Sans", sans-serif; }
.status { flex: none; height: 14px; display: flex; align-items: center; justify-content: flex-end; background: #f1edec; padding-right: 33px; gap: 5px; font: 9px/12px Roboto, sans-serif; }
.status svg { width: 12px; height: 11px; }
.s1 { margin-right: 18px; }
.edge { flex: none; height: 3px; background: #b9cbe0; border-top: 1px solid #7c92b0; display: flex; padding-left: 243px; gap: 3px; }
.edge i { width: 42px; background: #e8edf4; border: 1px solid #556; border-bottom: 0; }
```
